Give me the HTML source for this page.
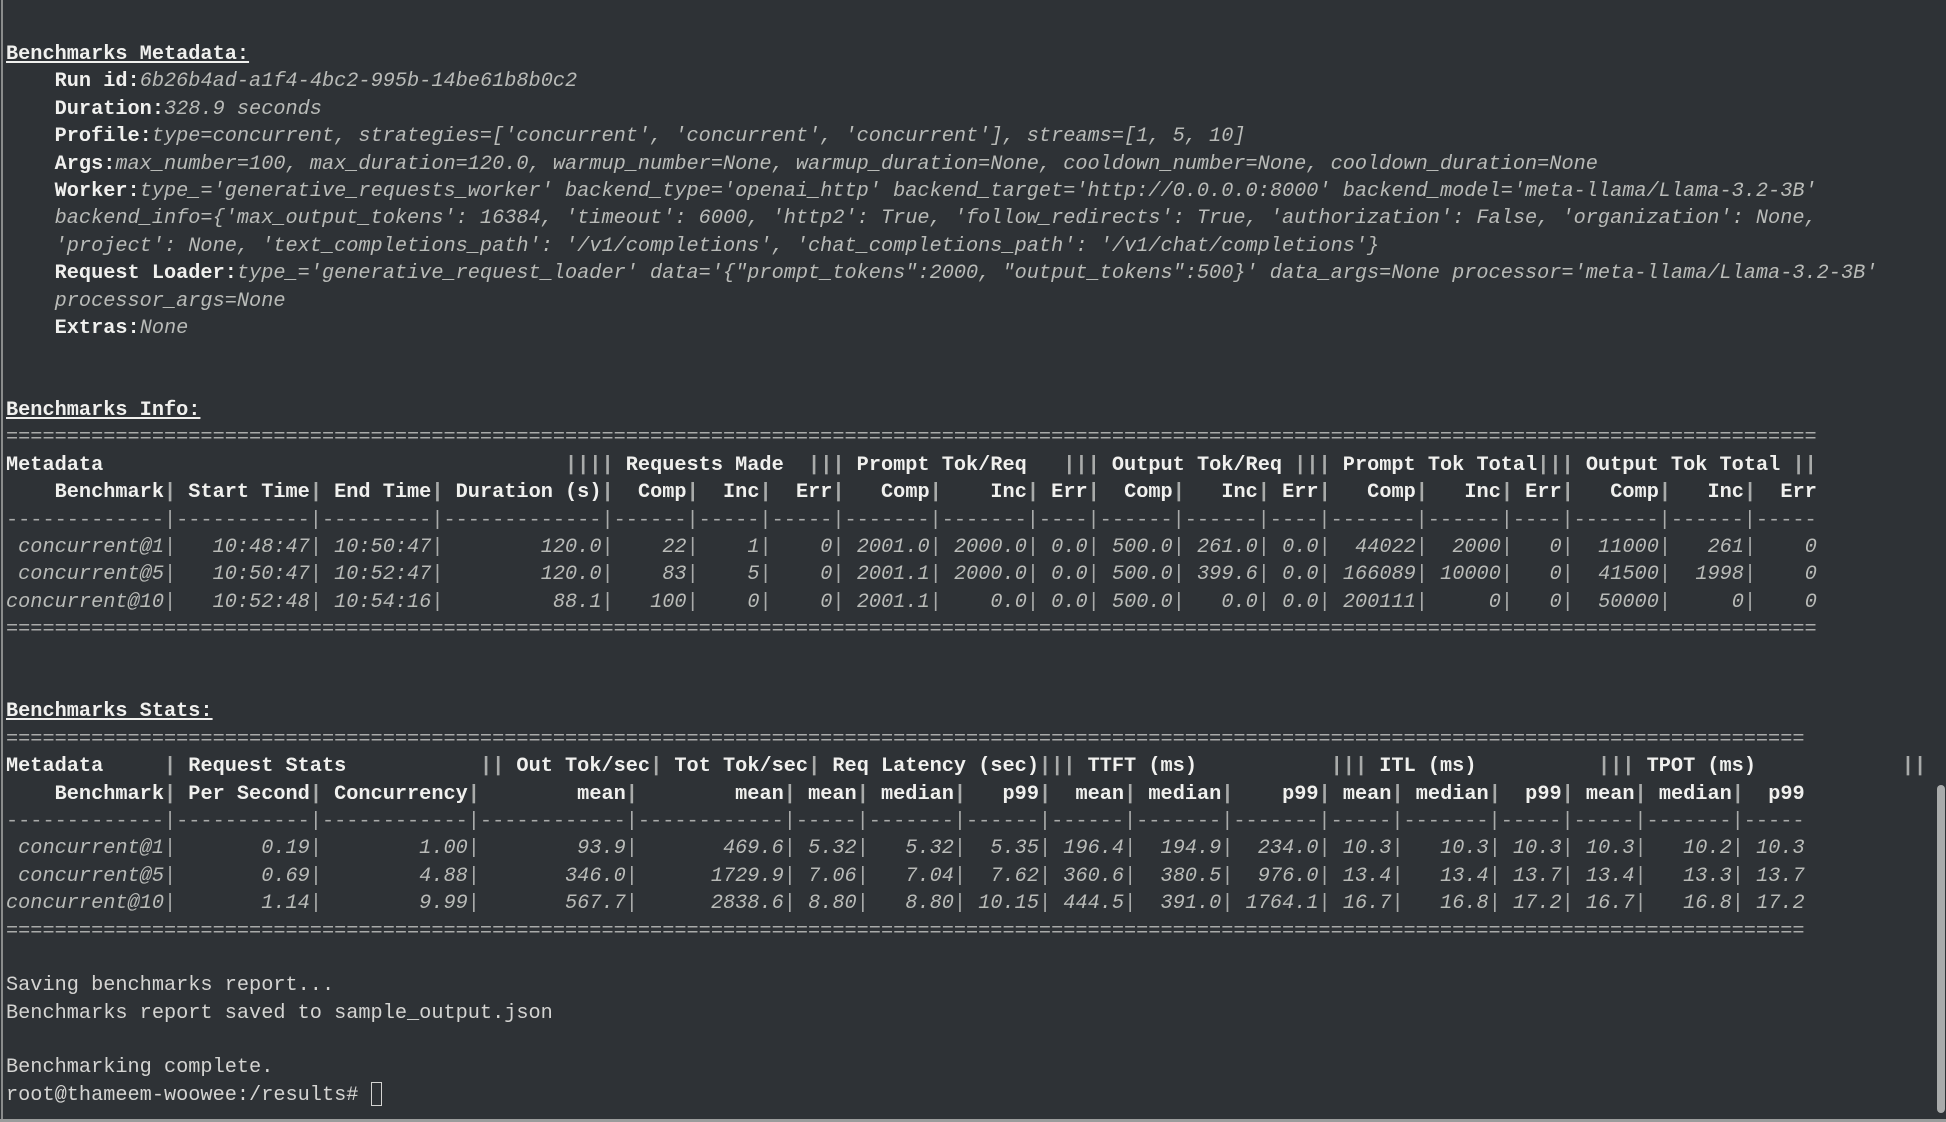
<!DOCTYPE html>
<html><head><meta charset="utf-8"><style>
html,body{margin:0;padding:0;}
body{width:1946px;height:1122px;background:#2e3236;overflow:hidden;position:relative;}
pre{position:absolute;left:6px;top:41px;margin:0;font-family:"Liberation Mono","DejaVu Sans Mono",monospace;font-size:20.25px;line-height:27.39px;color:#d4d4d2;white-space:pre;}
b{color:#f0f0ee;font-weight:bold;}
i{color:#b9bbb8;font-style:italic;}
u{text-decoration:underline;}
.s{color:#a9abaa;}
.lb{position:absolute;left:1px;top:0;width:2px;height:1122px;background:#8a8c8c;}
.sb{position:absolute;left:1937px;top:785px;width:8px;height:328px;border-radius:4px;background:#a9abab;}
.bt{position:absolute;left:0;top:1119px;width:1946px;height:3px;background:#9a9c9c;}
.cur{display:inline-block;width:11px;height:24px;border:1px solid #d4d4d2;vertical-align:-6px;box-sizing:border-box;}
</style></head><body>
<div class="lb"></div><div class="sb"></div><div class="bt"></div>
<pre><b><u>Benchmarks Metadata:</u></b>
    <b>Run id:</b><i>6b26b4ad-a1f4-4bc2-995b-14be61b8b0c2</i>
    <b>Duration:</b><i>328.9 seconds</i>
    <b>Profile:</b><i>type=concurrent, strategies=['concurrent', 'concurrent', 'concurrent'], streams=[1, 5, 10]</i>
    <b>Args:</b><i>max_number=100, max_duration=120.0, warmup_number=None, warmup_duration=None, cooldown_number=None, cooldown_duration=None</i>
    <b>Worker:</b><i>type_='generative_requests_worker' backend_type='openai_http' backend_target='http://0.0.0.0:8000' backend_model='meta-llama/Llama-3.2-3B'</i>
    <i>backend_info={'max_output_tokens': 16384, 'timeout': 6000, 'http2': True, 'follow_redirects': True, 'authorization': False, 'organization': None,</i>
    <i>'project': None, 'text_completions_path': '/v1/completions', 'chat_completions_path': '/v1/chat/completions'}</i>
    <b>Request Loader:</b><i>type_='generative_request_loader' data='{"prompt_tokens":2000, "output_tokens":500}' data_args=None processor='meta-llama/Llama-3.2-3B'</i>
    <i>processor_args=None</i>
    <b>Extras:</b><i>None</i>


<b><u>Benchmarks Info:</u></b>
<span class="s">=====================================================================================================================================================</span>
<b>Metadata                                      <span class="s">||||</span> Requests Made  <span class="s">|||</span> Prompt Tok/Req   <span class="s">|||</span> Output Tok/Req <span class="s">|||</span> Prompt Tok Total<span class="s">|||</span> Output Tok Total <span class="s">||</span></b>
<b>    Benchmark<span class="s">|</span> Start Time<span class="s">|</span> End Time<span class="s">|</span> Duration (s)<span class="s">|</span>  Comp<span class="s">|</span>  Inc<span class="s">|</span>  Err<span class="s">|</span>   Comp<span class="s">|</span>    Inc<span class="s">|</span> Err<span class="s">|</span>  Comp<span class="s">|</span>   Inc<span class="s">|</span> Err<span class="s">|</span>   Comp<span class="s">|</span>   Inc<span class="s">|</span> Err<span class="s">|</span>   Comp<span class="s">|</span>   Inc<span class="s">|</span>  Err</b>
<span class="s">-------------|-----------|---------|-------------|------|-----|-----|-------|-------|----|------|------|----|-------|------|----|-------|------|-----</span>
<i> concurrent@1<span class="s">|</span>   10:48:47<span class="s">|</span> 10:50:47<span class="s">|</span>        120.0<span class="s">|</span>    22<span class="s">|</span>    1<span class="s">|</span>    0<span class="s">|</span> 2001.0<span class="s">|</span> 2000.0<span class="s">|</span> 0.0<span class="s">|</span> 500.0<span class="s">|</span> 261.0<span class="s">|</span> 0.0<span class="s">|</span>  44022<span class="s">|</span>  2000<span class="s">|</span>   0<span class="s">|</span>  11000<span class="s">|</span>   261<span class="s">|</span>    0</i>
<i> concurrent@5<span class="s">|</span>   10:50:47<span class="s">|</span> 10:52:47<span class="s">|</span>        120.0<span class="s">|</span>    83<span class="s">|</span>    5<span class="s">|</span>    0<span class="s">|</span> 2001.1<span class="s">|</span> 2000.0<span class="s">|</span> 0.0<span class="s">|</span> 500.0<span class="s">|</span> 399.6<span class="s">|</span> 0.0<span class="s">|</span> 166089<span class="s">|</span> 10000<span class="s">|</span>   0<span class="s">|</span>  41500<span class="s">|</span>  1998<span class="s">|</span>    0</i>
<i>concurrent@10<span class="s">|</span>   10:52:48<span class="s">|</span> 10:54:16<span class="s">|</span>         88.1<span class="s">|</span>   100<span class="s">|</span>    0<span class="s">|</span>    0<span class="s">|</span> 2001.1<span class="s">|</span>    0.0<span class="s">|</span> 0.0<span class="s">|</span> 500.0<span class="s">|</span>   0.0<span class="s">|</span> 0.0<span class="s">|</span> 200111<span class="s">|</span>     0<span class="s">|</span>   0<span class="s">|</span>  50000<span class="s">|</span>     0<span class="s">|</span>    0</i>
<span class="s">=====================================================================================================================================================</span>


<b><u>Benchmarks Stats:</u></b>
<span class="s">====================================================================================================================================================</span>
<b>Metadata     <span class="s">|</span> Request Stats           <span class="s">||</span> Out Tok/sec<span class="s">|</span> Tot Tok/sec<span class="s">|</span> Req Latency (sec)<span class="s">|||</span> TTFT (ms)   <span class="s">        |||</span> ITL (ms)          <span class="s">|||</span> TPOT (ms)            <span class="s">||</span></b>
<b>    Benchmark<span class="s">|</span> Per Second<span class="s">|</span> Concurrency<span class="s">|</span>        mean<span class="s">|</span>        mean<span class="s">|</span> mean<span class="s">|</span> median<span class="s">|</span>   p99<span class="s">|</span>  mean<span class="s">|</span> median<span class="s">|</span>    p99<span class="s">|</span> mean<span class="s">|</span> median<span class="s">|</span>  p99<span class="s">|</span> mean<span class="s">|</span> median<span class="s">|</span>  p99</b>
<span class="s">-------------|-----------|------------|------------|------------|-----|-------|------|------|-------|-------|-----|-------|-----|-----|-------|-----</span>
<i> concurrent@1<span class="s">|</span>       0.19<span class="s">|</span>        1.00<span class="s">|</span>        93.9<span class="s">|</span>       469.6<span class="s">|</span> 5.32<span class="s">|</span>   5.32<span class="s">|</span>  5.35<span class="s">|</span> 196.4<span class="s">|</span>  194.9<span class="s">|</span>  234.0<span class="s">|</span> 10.3<span class="s">|</span>   10.3<span class="s">|</span> 10.3<span class="s">|</span> 10.3<span class="s">|</span>   10.2<span class="s">|</span> 10.3</i>
<i> concurrent@5<span class="s">|</span>       0.69<span class="s">|</span>        4.88<span class="s">|</span>       346.0<span class="s">|</span>      1729.9<span class="s">|</span> 7.06<span class="s">|</span>   7.04<span class="s">|</span>  7.62<span class="s">|</span> 360.6<span class="s">|</span>  380.5<span class="s">|</span>  976.0<span class="s">|</span> 13.4<span class="s">|</span>   13.4<span class="s">|</span> 13.7<span class="s">|</span> 13.4<span class="s">|</span>   13.3<span class="s">|</span> 13.7</i>
<i>concurrent@10<span class="s">|</span>       1.14<span class="s">|</span>        9.99<span class="s">|</span>       567.7<span class="s">|</span>      2838.6<span class="s">|</span> 8.80<span class="s">|</span>   8.80<span class="s">|</span> 10.15<span class="s">|</span> 444.5<span class="s">|</span>  391.0<span class="s">|</span> 1764.1<span class="s">|</span> 16.7<span class="s">|</span>   16.8<span class="s">|</span> 17.2<span class="s">|</span> 16.7<span class="s">|</span>   16.8<span class="s">|</span> 17.2</i>
<span class="s">====================================================================================================================================================</span>

Saving benchmarks report...
Benchmarks report saved to sample_output.json

Benchmarking complete.
root@thameem-woowee:/results# <span class="cur"></span></pre>
</body></html>
